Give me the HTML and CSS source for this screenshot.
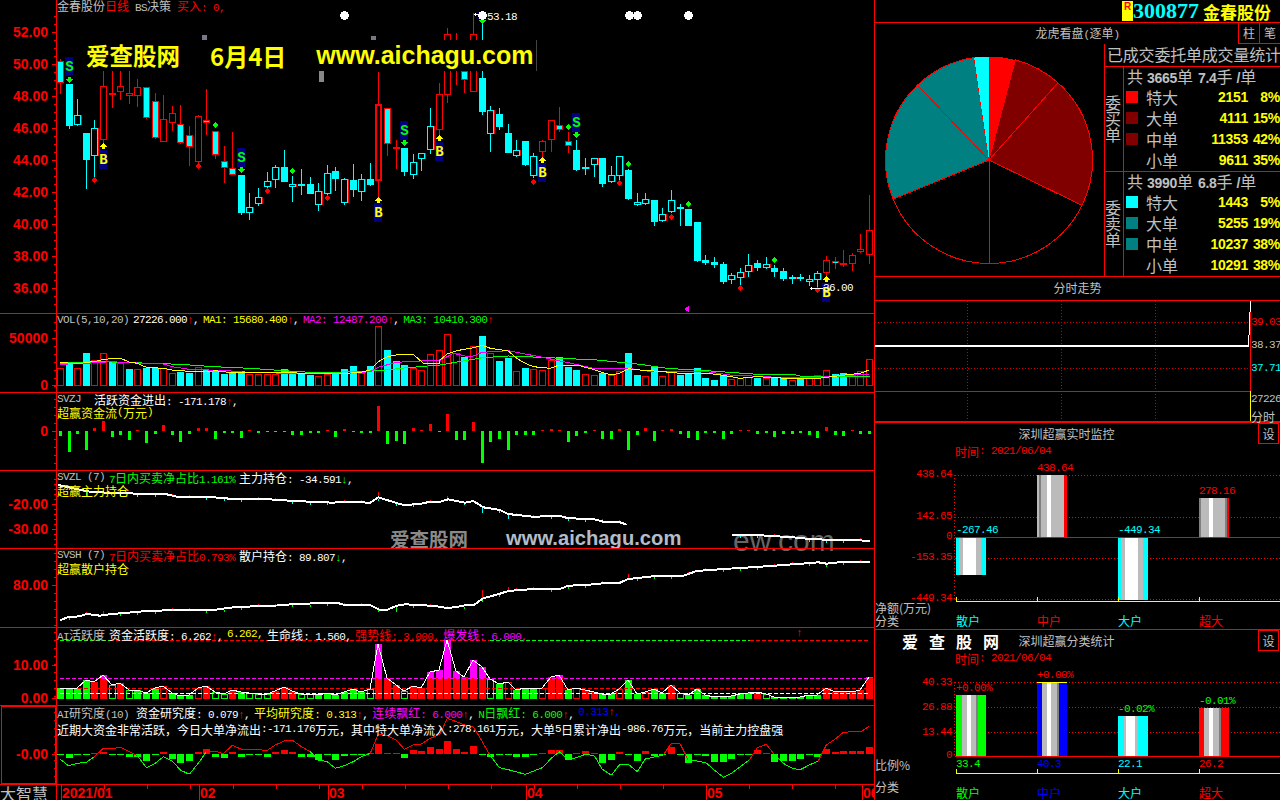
FILE: index.html
```html
<!DOCTYPE html>
<html lang="zh-CN">
<head>
<meta charset="utf-8">
<title>金春股份 300877</title>
<link rel="stylesheet" href="styles.css">
</head>
<body>
<div class="app">
  <main class="left">
    <div class="wm-main"><span class="wm-a">爱查股网</span><span class="wm-b">6月4日</span><span class="wm-c">www.aichagu.com</span></div>
    <div class="wm-mid"><span class="wm-d">爱查股网</span><span class="wm-e">www.aichagu.com</span><span class="wm-f">ew.com</span></div>

    <section class="pane h314" id="p-main">
      <div class="legend"><div class="lg-row"><span class="grey">金春股份</span><span class="red nogap">日线</span><span class="grey gap2"><span class="m">BS</span>决策</span><span class="red gap2">买入<span class="m">: 0,</span></span></div></div>
    </section>
    <section class="pane h79" id="p-vol">
      <div class="legend"><div class="lg-row"><span class="m grey">VOL(5,10,20)</span><span class="m white">27226.000<span class="red">↑</span>,</span><span class="m yellow">MA1: 15680.400<span class="red">↑</span><span class="white">,</span></span><span class="m magenta">MA2: 12487.200<span class="red">↑</span><span class="white">,</span></span><span class="m green">MA3: 10410.300<span class="red">↑</span></span></div></div>
    </section>
    <section class="pane h78" id="p-zj">
      <div class="legend"><div class="lg-row"><span class="m grey gapr">SVZJ</span><span class="white">活跃资金进出<span class="m">: -171.178<span class="red">↑</span>,</span></span></div><div class="lg-row yellow">超赢资金流<span class="m">(</span>万元<span class="m">)</span></div></div>
    </section>
    <section class="pane h78" id="p-zl">
      <div class="legend"><div class="lg-row"><span class="m grey">SVZL (7)</span><span class="green"><span class="m">7</span>日内买卖净占比<span class="m">1.161%</span></span><span class="white">主力持仓<span class="m">: -34.591<span class="green">↓</span>,</span></span></div><div class="lg-row yellow">超赢主力持仓</div></div>
    </section>
    <section class="pane h79" id="p-sh">
      <div class="legend"><div class="lg-row"><span class="m grey">SVSH (7)</span><span class="red"><span class="m">7</span>日内买卖净占比<span class="m">0.793%</span></span><span class="white">散户持仓<span class="m">: 89.807<span class="green">↓</span>,</span></span></div><div class="lg-row yellow">超赢散户持仓</div></div>
    </section>
    <section class="pane h78" id="p-act">
      <div class="legend"><div class="lg-row"><span class="grey"><span class="m">AI</span>活跃度</span><span class="white">资金活跃度<span class="m">: 6.262<span class="red">↑</span>,</span></span><span class="m yellow">6.262,</span><span class="white">生命线<span class="m">: 1.560,</span></span><span class="red">强势线<span class="m">: 3.000,</span></span><span class="magenta">爆发线<span class="m">: 6.000,</span></span></div></div>
    </section>
    <section class="pane h79" id="p-res">
      <div class="legend"><div class="lg-row"><span class="grey"><span class="m">AI</span>研究度<span class="m">(10)</span></span><span class="white gap7">资金研究度<span class="m">: 0.079<span class="red">↑</span>,</span></span><span class="yellow">平均研究度<span class="m">: 0.313<span class="red">↑</span><span class="white">,</span></span></span><span class="magenta">连续飘红<span class="m">: 6.000<span class="red">↑</span><span class="white">,</span></span></span><span class="green"><span class="m">N</span>日飘红<span class="m">: 6.000<span class="red">↑</span><span class="white">,</span></span></span><span class="m blue">0.313<span class="red">↑</span>,</span></div><div class="lg-row white lg-second">近期大资金非常活跃，今日大单净流出<span class="m">:-171.176</span>万元，其中特大单净流入<span class="m">:278.161</span>万元，大单<span class="m">5</span>日累计净出<span class="m">-986.76</span>万元，当前主力控盘强</div></div>
    </section>
    <section class="pane h15" id="p-axis">
      <div class="brand">大智慧</div>
    </section>
  </main>

  <aside class="right">
    <header class="quote"><span class="rmark">R</span><span class="code">300877</span><span class="qname">金春股份</span></header>

    <section class="dragon">
      <div class="dragon-head">
        <span></span>
        <span class="sec-title">龙虎看盘<span class="m">(</span>逐单<span class="m">)</span></span>
        <div class="btns"><span class="btn">柱</span><span class="btn">笔</span></div>
      </div>
      <div class="dragon-body">
        <div class="pie-box">
          <svg class="pie" width="229" height="232" viewBox="0 0 229 232" id="pie"></svg>
        </div>
        <div class="stat">
          <div class="stat-title">已成交委托单成交量统计</div>
          <div class="block">
            <div class="vlabel">委买单</div>
            <div class="rows">
              <div class="total">共<b class="tn">3665</b>单<b class="tn tn2">7.4</b>手<b class="tn">/</b>单</div>
              <div class="row"><i class="sw s-red"></i><span class="lb">特大</span><b class="num">2151</b><b class="pct">8%</b></div>
              <div class="row"><i class="sw s-dred"></i><span class="lb">大单</span><b class="num">4111</b><b class="pct">15%</b></div>
              <div class="row"><i class="sw s-dred"></i><span class="lb">中单</span><b class="num">11353</b><b class="pct">42%</b></div>
              <div class="row"><i class="sw"></i><span class="lb">小单</span><b class="num">9611</b><b class="pct">35%</b></div>
            </div>
          </div>
          <div class="block last">
            <div class="vlabel">委卖单</div>
            <div class="rows">
              <div class="total">共<b class="tn">3990</b>单<b class="tn tn2">6.8</b>手<b class="tn">/</b>单</div>
              <div class="row"><i class="sw s-cyan"></i><span class="lb">特大</span><b class="num">1443</b><b class="pct">5%</b></div>
              <div class="row"><i class="sw s-teal"></i><span class="lb">大单</span><b class="num">5255</b><b class="pct">19%</b></div>
              <div class="row"><i class="sw s-teal"></i><span class="lb">中单</span><b class="num">10237</b><b class="pct">38%</b></div>
              <div class="row"><i class="sw"></i><span class="lb">小单</span><b class="num">10291</b><b class="pct">38%</b></div>
            </div>
          </div>
        </div>
      </div>
    </section>

    <section class="fenshi">
      <div class="fs-head sec-title">分时走势</div>
      <svg id="fs" class="block-svg" width="405" height="122" viewBox="875 301 405 122"></svg>
    </section>

    <section class="monitor">
      <div class="sec-head"><span class="sec-title">深圳超赢实时监控</span><span class="btn set">设</span></div>
      <svg id="mon" class="block-svg" width="405" height="185" viewBox="875 445 405 185"></svg>
    </section>

    <section class="classify">
      <div class="sec-head"><span class="logo">爱查股网</span><span class="sec-title">深圳超赢分类统计</span><span class="btn set">设</span></div>
      <svg id="cls" class="block-svg" width="405" height="149" viewBox="875 651 405 149"></svg>
    </section>
  </aside>
</div>
<script src="chart.js"></script>
</body>
</html>
```
FILE: styles.css
```css
* { box-sizing: border-box; }
html, body { margin: 0; padding: 0; background: #000; }
body { width: 1280px; height: 800px; overflow: hidden; font: 12px/13px "Noto Sans CJK SC", "Liberation Sans", sans-serif; color: #c0c0c0; }
.app { display: flex; width: 1280px; height: 800px; }
.left { position: relative; width: 875px; flex: none; display: flex; flex-direction: column; border-right: 1px solid #f00; }
.right { flex: 1; display: flex; flex-direction: column; min-width: 0; overflow: hidden; }

.pane { position: relative; z-index: 1; overflow: hidden; border-bottom: 1px solid #f00; }
.pane svg { display: block; }
.h314 { height: 314px; } .h79 { height: 79px; } .h78 { height: 78px; }
.h15 { height: 15px; border-bottom: 0; }
svg { shape-rendering: crispEdges; }

.legend { position: absolute; left: 57px; top: 0; white-space: pre; }
#p-main .legend { top: -1px; }
.lg-row { display: flex; gap: 4px; height: 13px; }
.lg-row.yellow, .lg-second { gap: 0; }
.lg-second { margin-top: 4px; }
.nogap { margin-left: -4px; }
.gap2 { margin-left: 2px; }
.gap7 { margin-left: 3px; }
.gapr { margin-right: 9px; }

.m { font-family: "Liberation Mono", monospace; font-size: 11px; letter-spacing: -.6px; }
.grey { color: #c0c0c0; } .white { color: #fff; } .red { color: #f00; } .yellow { color: #ff0; }
.magenta { color: #f0f; } .green { color: #0f0; } .blue { color: #00f; } .cyan { color: #0ff; }

.brand { position: absolute; left: 0; top: -1px; font-size: 16px; line-height: 18px; color: #c0c0c0; }

.wm-main { position: absolute; z-index: 2; left: 83px; top: 40px; width: 454px; height: 31px; background: #000; color: #ff0; font-weight: 700; display: flex; align-items: center; line-height: 31px; white-space: nowrap; border-right: 1px solid #444; }
.wm-a { font-size: 23.5px; margin-left: 3px; }
.wm-b { font-size: 24px; margin-left: 30px; }
.wm-c { font: 700 25px/31px "Liberation Sans", sans-serif; margin-left: 30px; }
.wm-mid { position: absolute; z-index: 0; left: 390px; top: 522px; width: 450px; height: 33px; overflow: hidden; white-space: nowrap; line-height: 33px; }
.wm-d { position: absolute; left: 0; top: 0; font-size: 19.5px; font-weight: 700; color: #8a8a8a; }
.wm-e { position: absolute; left: 116px; top: 0; font: 700 20.2px/33px "Liberation Sans", sans-serif; color: #b4bcc8; }
.wm-f { position: absolute; left: 343px; top: 2px; font: 400 30px/33px "Liberation Sans", sans-serif; color: #666; }

.quote { height: 23px; flex: none; border-bottom: 1px solid #f00; display: flex; align-items: stretch; padding-left: 247px; }
.rmark { width: 11px; height: 20px; margin-top: 1px; background: #ff0; color: #f00; font: 700 10px/11px "Liberation Sans", sans-serif; text-align: center; }
.code { width: 67px; font: 700 22px/22px "Liberation Serif", serif; color: #0ff; }
.qname { font-size: 17px; line-height: 24px; font-weight: 700; color: #ff0; margin-left: 3px; white-space: nowrap; }

.sec-title { color: #c0c0c0; font-size: 12px; line-height: 20px; white-space: nowrap; }
.dragon { height: 254px; flex: none; border-bottom: 1px solid #f00; display: flex; flex-direction: column; }
.dragon-head { height: 21px; display: grid; grid-template-columns: 42px 1fr 42px; text-align: center; }
.btns { display: flex; }
.btn { display: block; width: 21px; height: 21px; border: 1px solid #f00; border-top: 0; border-right: 0; color: #c0c0c0; font-size: 12px; line-height: 20px; text-align: center; }
.dragon-body { display: flex; height: 232px; }
.pie-box { width: 229px; flex: none; }
.pie { display: block; }
.stat { flex: 1; border-left: 1px solid #f00; min-width: 0; }
.stat-title { height: 23px; border-bottom: 1px solid #f00; font-size: 16px; line-height: 21px; padding-left: 2px; white-space: nowrap; color: #c0c0c0; overflow: hidden; letter-spacing: -.2px; }
.block { display: flex; height: 105px; border-bottom: 1px solid #f00; }
.block.last { border-bottom: 0; height: 104px; }
.vlabel { width: 19px; flex: none; border-right: 1px solid #f00; font-size: 16px; line-height: 15px; writing-mode: vertical-lr; text-orientation: upright; text-align: center; color: #c0c0c0; }
.rows { flex: 1; display: flex; flex-direction: column; min-width: 0; }
.total { height: 19px; padding-left: 3px; font-size: 16px; line-height: 19px; color: #c0c0c0; white-space: nowrap; }
.tn { font: 700 14px/19px "Liberation Sans", sans-serif; margin-left: 4px; letter-spacing: -.3px; }
.tn2 { margin-left: 5px; }
.tn:not(.tn2) { margin-right: 0; }
.row { height: 21px; display: grid; grid-template-columns: 2px 12px 8px 40px 62px 1fr; align-items: center; }
.sw { grid-column: 2; width: 12px; height: 12px; display: block; }
.s-red { background: #f00; } .s-dred { background: #800000; } .s-cyan { background: #0ff; } .s-teal { background: #008080; }
.lb { grid-column: 4; font-size: 16px; line-height: 20px; color: #c0c0c0; }
.num, .pct { font: 700 14px/20px "Liberation Sans", sans-serif; color: #ff0; text-align: right; letter-spacing: -.3px; }
.num { grid-column: 5; }
.pct { grid-column: 6; padding-right: 0; }

.fenshi { height: 146px; flex: none; display: flex; flex-direction: column; }
.fs-head { height: 24px; border-bottom: 1px solid #f00; text-align: center; line-height: 21px; }
.block-svg { display: block; flex: none; }

.monitor { height: 207px; flex: none; display: flex; flex-direction: column; border-top: 0; }
.classify { height: 170px; flex: none; display: flex; flex-direction: column; position: relative; }
.sec-head { height: 22px; flex: none; display: flex; align-items: flex-start; padding-right: 1px; }
.sec-head .sec-title { flex: 1; text-align: center; line-height: 22px; }
.btn.set { border: 1px solid #f00; border-top: 1px solid #f00; height: 21px; line-height: 19px; }
.logo { position: absolute; left: 27px; top: 2px; font-size: 16px; line-height: 18px; font-weight: 700; color: #fff; letter-spacing: 11px; white-space: nowrap; }

.ty { font: 700 14px "Liberation Sans", sans-serif; fill: #f00; text-anchor: end; dominant-baseline: central; }
.tx { font: 700 14px "Liberation Sans", sans-serif; fill: #f00; dominant-baseline: central; }
.tm { font-family: "Liberation Mono", monospace; font-size: 11px; letter-spacing: -.6px; dominant-baseline: central; }
.tc { font-family: "Noto Sans CJK SC", sans-serif; font-size: 12px; dominant-baseline: central; }
.end { text-anchor: end; }
.bl { font-family: "Liberation Sans", sans-serif; font-size: 14px; font-weight: 400; }
.lab { font-family: "Liberation Mono", monospace; font-size: 14px; font-weight: 700; text-anchor: middle; dominant-baseline: central; }
```
FILE: chart.js
```js
(function () {
  var R = '#f00', C = '#0ff', G = '#0f0', Y = '#ff0', W = '#fff', M = '#f0f';
  var N = 95;
  function X(i) { return Math.round(60 + 8.606 * i); }
  function rect(x, y, w, h, f) { return '<rect x="' + x + '" y="' + y + '" width="' + w + '" height="' + Math.max(h, 0) + '" fill="' + f + '"/>'; }
  function box(x, y, w, h, s, f) { return '<rect x="' + (x + .5) + '" y="' + (y + .5) + '" width="' + (w - 1) + '" height="' + Math.max(h - 1, 0) + '" stroke="' + s + '" fill="' + (f || 'none') + '"/>'; }
  function line(x1, y1, x2, y2, s, extra) { return '<line x1="' + x1 + '" y1="' + y1 + '" x2="' + x2 + '" y2="' + y2 + '" stroke="' + s + '" ' + (extra || '') + '/>'; }
  function poly(pts, s, w) { return '<polyline fill="none" stroke="' + s + '" stroke-width="' + (w || 1) + '" points="' + pts.map(function (p) { return p[0].toFixed(1) + ',' + p[1].toFixed(1); }).join(' ') + '"/>'; }
  function text(x, y, t, c, f) { return '<text x="' + x + '" y="' + y + '" class="' + c + '"' + (f ? ' fill="' + f + '"' : '') + '>' + t + '</text>'; }
  function Z(list, xo, yo) { return list.map(function (p) { return [xo + p[0] / 3, yo + p[1] / 3]; }); }
  function mount(id, top, h) {
    var p = document.getElementById(id);
    var s = document.createElementNS('http://www.w3.org/2000/svg', 'svg');
    s.setAttribute('width', 874); s.setAttribute('height', h);
    s.setAttribute('viewBox', '0 ' + top + ' 874 ' + h);
    return { el: s, p: p };
  }
  function done(m, html) { m.el.innerHTML = html; m.p.insertBefore(m.el, m.p.firstChild); }
  function axis(top, h, majors, step, from, to) {
    var o = rect(56, top, 1, h, R);
    for (var y = from; y <= to; y += step) o += rect(54, Math.round(y), 2, 1, R);
    majors.forEach(function (m) { o += rect(52, m[0], 4, 1, R) + text(48, m[0], m[1], 'ty'); });
    return o;
  }

  /* main candles: [bodyTop, bodyBottom, high, low, type] in 3x-zoom px; type 0 red hollow, 1 cyan solid, 2 cyan hollow, 3 red frame cyan fill */
  var K = [[183,250,178,282,3],[252,378,252,387,1],[346,376,297,378,2],[399,480,399,567,1],[385,470,360,530,2],[259,422,213,430,0],[280,284,213,323,4],[259,277,213,299,0],[280,290,213,311,0],[262,290,238,323,0],[262,355,262,358,3],[304,416,280,418,3],[358,428,286,428,0],[340,370,318,392,0],[373,430,316,432,3],[406,442,378,497,3],[349,488,346,490,0],[361,371,268,407,3],[394,466,394,478,3],[484,505,438,548,3],[505,526,397,526,3],[525,640,525,645,1],[622,640,580,660,2],[592,613,565,618,2],[544,562,516,570,2],[502,541,495,564,2],[501,545,450,545,1],[553,562,529,608,2],[552,556,507,585,1],[552,581,531,581,1],[574,617,549,633,2],[520,584,495,584,2],[513,536,501,573,1],[538,611,535,615,2],[541,572,492,590,1],[538,577,522,603,2],[537,554,489,557,1],[313,544,216,600,5],[325,433,325,470,3],[442,449,420,507,0],[444,515,444,527,1],[487,526,462,536,2],[460,479,460,513,2],[379,452,324,462,2],[283,391,250,405,0],[102,286,84,310,0],[100,110,100,255,4],[213,240,213,278,3],[102,275,40,275,0],[234,335,72,345,1],[331,404,318,456,2],[342,381,324,390,1],[399,459,372,459,1],[451,470,420,470,2],[423,496,423,498,1],[468,528,460,535,2],[424,456,420,475,0],[361,422,361,456,0],[376,391,321,396,3],[424,440,396,460,3],[450,510,420,512,1],[502,509,474,525,2],[475,497,475,531,2],[474,552,474,561,1],[526,548,498,548,2],[468,527,468,540,2],[510,597,507,600,1],[606,614,578,618,2],[598,614,578,614,2],[600,666,600,678,1],[643,665,624,665,2],[601,638,570,640,2],[621,627,612,678,6],[627,678,627,678,1],[666,783,666,785,1],[780,790,765,795,1],[786,795,771,804,1],[792,846,786,852,1],[826,842,820,852,2],[817,835,804,855,2],[796,818,762,830,2],[790,804,780,813,1],[793,806,771,808,2],[804,816,795,831,1],[813,836,804,842,1],[832,838,825,852,2],[832,838,822,842,1],[838,848,825,858,2],[820,842,813,860,2],[780,818,768,830,0],[782,788,771,807,7],[790,794,750,800,4],[765,793,760,813,0],[748,758,702,758,0],[690,764,585,792,0]];
  var o = axis(0, 313, [[32,'52.00'],[64,'50.00'],[96,'48.00'],[128,'46.00'],[160,'44.00'],[192,'42.00'],[224,'40.00'],[256,'38.00'],[288,'36.00']], 8, 16, 304);
  K.forEach(function (k, i) {
    var x = X(i), t = k[0] / 3, b = k[1] / 3, hi = k[2] / 3, lo = k[3] / 3, ty = k[4];
    var col = (ty === 0 || ty === 3 || ty === 4 || ty === 5 || ty === 7) ? R : C;
    o += rect(x, Math.round(hi), 1, Math.round(lo - hi), col);
    var rx = x - 3, ry = Math.round(t), rh = Math.max(Math.round(b - t), 2);
    if (i === 46) return;
    if (ty === 0 || ty === 5) { o += rect(rx, ry, 7, rh, '#000') + box(rx, ry, 7, rh, R); if (ty === 5) o += box(rx + 1, ry + 1, 5, rh - 2, R); }
    else if (ty === 1) o += rect(rx, ry, 7, rh, C);
    else if (ty === 2) o += rect(rx, ry, 7, rh, '#000') + box(rx, ry, 7, rh, C) + rect(x + 4, ry, 1, rh, R);
    else if (ty === 3) o += rect(rx, ry, 7, rh, R) + rect(rx + 1, ry + 1, 5, rh - 2, C);
    else if (ty === 4) o += rect(rx, ry, 7, rh, R);
    else if (ty === 6) o += rect(rx, ry, 7, rh, C);
    else if (ty === 7) o += rect(rx, ry, 7, rh, R) + rect(rx + 1, ry + 1, 5, Math.max(rh - 2, 1), C);
  });
  function dia(i, z, c) { var x = X(i) + .5, y = z / 3; return '<polygon points="' + (x - 3) + ',' + y + ' ' + x + ',' + (y - 3) + ' ' + (x + 3) + ',' + y + ' ' + x + ',' + (y + 3) + '" fill="' + c + '"/>'; }
  [[4,541],[16,499],[24,574],[31,595],[55,545],[65,550],[71,650],[79,865],[88,870]].forEach(function (d) { o += dia(d[0], d[1], R); });
  [[18,376],[27,514],[59,382],[66,493],[73,613],[83,781]].forEach(function (d) { o += dia(d[0], d[1], G); });
  function tag(i, z, ch) {
    var x = X(i), y = Math.round(z / 3);
    return rect(x - 4, y, 8, 19, '#000080') + text(x + .5, y + 10, ch, 'lab', ch === 'B' ? Y : G);
  }
  function arrowUp(i, z) { var x = X(i) + .5, y = z / 3; return '<polygon points="' + (x - 4) + ',' + (y + 3) + ' ' + x + ',' + (y - 1) + ' ' + (x + 4) + ',' + (y + 3) + '" fill="' + Y + '"/>' + rect(X(i) - 1, Math.round(y + 3), 3, 2, Y); }
  function arrowDn(i, z) { var x = X(i) + .5, y = z / 3; return rect(X(i) - 1, Math.round(y), 3, 3, G) + '<polygon points="' + (x - 4) + ',' + (y + 2) + ' ' + x + ',' + (y + 6) + ' ' + (x + 4) + ',' + (y + 2) + '" fill="' + G + '"/>'; }
  [[1,172,230],[21,445,502],[40,363,420],[60,340,397]].forEach(function (s) { o += tag(s[0], s[1], 'S') + arrowDn(s[0], s[2]); });
  [[5,450,433],[37,610,595],[44,425,408],[56,490,473],[89,848,832]].forEach(function (s) { o += tag(s[0], s[1], 'B') + arrowUp(s[0], s[2]); });
  o += rect(478, 12, 8, 7, '#000080') + arrowDn(49, 54);
  [344, 482, 629, 637, 688].forEach(function (x) { o += rect(x - 3, 12, 7, 7, W) + rect(x - 4, 14, 9, 3, W) + rect(x - 1, 11, 3, 9, W); });
  o += line(474, 14.5, 482, 14.5, W) + rect(475, 13, 1, 3, W) + text(487, 17, '53.18', 'tm', W);
  o += line(810, 288.5, 823, 288.5, W) + rect(811, 287, 1, 3, W) + text(823, 288, '36.00', 'tm', W);
  o += rect(202, 35, 5, 5, '#778') + rect(371, 36, 5, 4, '#778') + rect(319, 71, 5, 11, '#888');
  o += '<polygon points="684,309 689,306 689,312" fill="' + M + '"/>';
  var m = mount('p-main', 0, 313); done(m, o);

  /* volume */
  var V = [[0,175],[1,157],[0,175],[1,129],[0,150],[0,130],[1,157],[0,160],[1,178],[0,178],[1,173],[1,173],[0,175],[0,190],[1,185],[1,190],[0,172],[1,180],[1,183],[1,192],[1,185],[1,182],[0,192],[0,192],[0,192],[0,192],[1,178],[1,192],[1,192],[1,195],[0,198],[0,192],[1,192],[1,178],[1,168],[0,190],[1,168],[0,48],[1,120],[1,154],[1,165],[0,175],[0,180],[0,133],[0,120],[0,72],[0,128],[1,140],[0,108],[1,78],[0,130],[1,153],[1,145],[0,183],[1,175],[0,178],[0,180],[0,150],[1,142],[1,170],[1,180],[0,193],[0,196],[1,188],[0,196],[0,184],[1,129],[1,195],[0,199],[1,172],[0,199],[0,185],[1,195],[1,190],[1,175],[1,204],[1,210],[1,195],[0,208],[0,204],[0,200],[1,203],[0,203],[1,203],[1,203],[0,210],[1,206],[0,205],[0,196],[0,181],[1,193],[1,190],[0,194],[0,184],[0,148]];
  o = axis(314, 78, [[338,'50000'],[385,'0']], 8, 322, 386);
  V.forEach(function (v, i) {
    var x = X(i) - 3, y = Math.round(310 + v[1] / 3), h = 386 - y;
    o += v[0] ? rect(x, y, 7, h, C) : box(x, y, 7, h, R);
  });
  var yA = Z([[180,157],[215,160],[232,162],[259,157],[283,155],[310,148],[361,145],[388,156],[412,160],[439,172],[490,175],[517,180],[568,184],[619,186],[646,182],[697,188],[750,188],[850,188],[930,190],[1006,192],[1084,187],[1111,180],[1135,155],[1162,140],[1200,133],[1240,133],[1270,160],[1318,160]], 0, 310).concat(Z([[0,150],[22,132],[50,122],[100,113],[127,106],[151,115],[205,123],[230,145],[256,160],[280,170],[330,175],[358,165],[410,165],[460,178],[490,188],[514,195],[538,190],[565,176],[600,180],[670,185],[720,190],[800,190],[850,196],[900,205],[950,200],[1040,205],[1100,207],[1135,205],[1190,198],[1260,190],[1288,180]], 440, 310));
  var mA = Z([[180,163],[259,160],[334,155],[388,158],[490,162],[517,170],[568,178],[682,182],[750,188],[900,190],[1040,190],[1111,185],[1135,172],[1189,157],[1318,150]], 0, 310).concat(Z([[0,152],[40,130],[75,138],[100,138],[127,127],[205,122],[256,132],[307,142],[385,158],[460,175],[565,175],[620,183],[720,185],[800,185],[870,195],[980,200],[1040,204],[1135,202],[1288,192]], 440, 310));
  var gA = Z([[180,160],[310,155],[540,163],[643,170],[750,175],[850,182],[930,187],[1000,187],[1135,182],[1213,174],[1318,165]], 0, 310).concat(Z([[0,165],[127,143],[205,138],[300,142],[470,150],[600,163],[680,175],[800,182],[950,193],[1060,193],[1080,198],[1290,198]], 440, 310));
  o += poly(gA, G) + poly(mA, M) + poly(yA, Y);
  m = mount('p-vol', 314, 78); done(m, o);

  /* SVZJ */
  var J = [-14,-64,-8,-58,10,31,-17,-11,-26,2,-35,-8,17,-12,-32,-8,10,10,-23,-5,-5,-20,4,-5,-2,-4,-4,-11,-11,-7,-5,1,-17,6,-1,-7,-6,76,-38,-29,-38,10,4,22,-4,52,-28,-28,28,-97,-32,-23,-58,-11,-11,-11,4,6,3,-34,-14,-5,1,-23,-23,6,-58,-11,10,-31,1,5,-8,-20,-28,-5,-5,-23,-8,1,4,-8,-5,-17,-8,-8,-5,-11,-20,12,-11,-14,4,-8,-8];
  o = axis(393, 77, [[431,'0']], 8, 399, 463);
  J.forEach(function (v, i) {
    var x = X(i) - 1, h = Math.max(Math.round(Math.abs(v) / 3), 1);
    o += v > 0 ? rect(x, 431 - h, 3, h, R) : rect(x, 431, 3, h, G);
  });
  m = mount('p-zj', 393, 77); done(m, o);

  function ticks(pts, big, ca) {
    var s = '';
    function at(x) { for (var j = 0; j < pts.length - 1; j++) if (x >= pts[j][0] && x <= pts[j + 1][0]) return pts[j][1] + (pts[j + 1][1] - pts[j][1]) * (x - pts[j][0]) / (pts[j + 1][0] - pts[j][0]); return null; }
    for (var i = 0; i < N; i++) { var y = at(X(i)); if (y === null) continue; var red = (i * 7) % 5 < 2; if (i % 2) s += rect(X(i), Math.round(y) - (red ? 2 : -1), 1, 2, red ? R : ca); }
    big.forEach(function (b) { var y = at(X(b[0])); if (y !== null) s += rect(X(b[0]), Math.round(y) + (b[1] < 0 ? b[1] : 0), 1, Math.abs(b[1]), b[1] < 0 ? R : ca); });
    return s;
  }

  /* SVZL */
  var zl1 = Z([[175,525],[220,535],[270,545],[320,548],[380,548],[420,553],[500,553],[530,560],[620,560],[700,567],[800,567],[830,570],[930,575],[1000,578],[1030,575],[1110,578],[1135,562],[1160,570],[1210,585],[1260,582],[1290,575],[1320,575]], 0, 310).concat(Z([[25,568],[50,573],[75,578],[100,573],[130,592],[180,600],[205,612],[230,615],[280,620],[360,618],[385,625],[460,627],[490,635],[540,637],[560,644]], 440, 310));
  var zl2 = Z([[877,674],[930,674],[980,677],[1060,682],[1120,688],[1290,692]], 440, 310);
  o = axis(471, 77, [[504,'-20.00'],[529,'-30.00']], 5, 479, 544);
  o += ticks(zl1, [[37,-6],[45,-4],[49,7],[52,5],[3,5]], C) + ticks(zl2, [], C) + poly(zl1, W, 2) + poly(zl2, W, 2);
  m = mount('p-zl', 471, 77); done(m, o);

  /* SVSH */
  var sh = Z([[180,226],[205,216],[240,214],[260,207],[300,212],[335,207],[385,203],[430,199],[520,195],[640,195],[700,187],[780,183],[850,181],[880,177],[950,175],[1010,173],[1035,180],[1110,180],[1140,195],[1160,195],[1190,182],[1215,178],[1290,182],[1320,185]], 0, 545).concat(Z([[20,189],[50,186],[75,181],[100,181],[130,160],[180,146],[205,138],[280,132],[360,132],[385,122],[440,120],[490,115],[540,113],[565,102],[640,94],[730,92],[770,78],[850,72],[950,66],[1030,60],[1085,56],[1135,52],[1160,56],[1210,50],[1290,50]], 440, 545));
  o = axis(549, 78, [[585,'80.00']], 8, 553, 625);
  o += ticks(sh, [[49,-9],[52,-4],[37,-2],[39,6],[66,-5],[5,-4]], G) + poly(sh, W, 2);
  o += '';
  m = mount('p-sh', 549, 78); done(m, o);

  /* activity: type g solid green, G hollow green, r solid red, R hollow red, m magenta on red */
  var A = 'g430 g430 g430 g405 r412 m390 G420 r414 G436 g436 g444 g430 R424 g444 g453 g450 R430 r424 G442 G448 r436 g442 G444 G447 G447 r438 r426 r437 G447 G447 g450 g445 g450 g442 g432 g441 G432 m297 r400 r420 G438 r423 r430 m381 m376 m285 m378 r396 m345 m366 G402 g417 R410 g435 g429 g432 R430 r396 m390 g435 R430 r435 r442 g447 g447 R432 g405 g447 R442 g432 g444 r420 G444 g450 g432 g450 g456 g453 g453 g447 g444 r441 G447 g456 g456 g456 g456 g450 g450 r430 r441 r437 r441 r435 m396'.split(' ');
  o = axis(628, 77, [[665,'10.00'],[698,'0.00']], 8, 632, 696);
  var base = 699, tops = [];
  A.forEach(function (a, i) {
    var t = a[0], z = +a.slice(1), y = Math.round(545 + z / 3), x = X(i) - 3, h = base - y;
    tops.push([X(i), y]);
    if (t === 'g') o += rect(x, y, 7, h, G);
    else if (t === 'G') o += box(x, y, 7, h, G);
    else if (t === 'r') o += rect(x, y, 7, h, R);
    else if (t === 'R') o += box(x, y, 7, h, R);
    else { o += rect(x, y, 7, 678 - y, M) + rect(x, 678, 7, base - 678, R); }
  });
  var dash = 'stroke-dasharray="4 2"';
  o += line(60, 640.5, 110, 640.5, G, dash) + line(110, 640.5, 490, 640.5, R, dash) + line(490, 640.5, 750, 640.5, G, dash) + line(750, 640.5, 870, 640.5, R, dash);
  o += line(60, 678.5, 870, 678.5, M, dash) + line(60, 688.5, 870, 688.5, R, dash) + line(60, 693.5, 870, 693.5, W, dash);
  o += poly(tops, W);
  o += text(796, 633, '↑', 'tm', R);
  m = mount('p-act', 628, 77); done(m, o);

  /* research */
  var Q = [632,640,632,632,624,621,632,632,636,636,650,630,622,642,656,650,622,612,636,639,621,636,632,632,636,621,615,621,636,636,646,632,645,634,632,632,624,597,626,624,640,615,618,606,612,588,612,621,603,632,636,632,632,636,636,632,627,615,615,646,624,618,627,654,645,621,632,648,618,635,632,606,632,654,632,635,651,651,642,632,632,615,627,651,648,648,642,632,636,612,621,618,618,618,606];
  o = rect(1, 706, 55, 78, '#000') + box(1, 706, 55, 78, R) + axis(706, 78, [[754,'-0.00']], 8, 712, 776);
  Q.forEach(function (z, i) {
    var y = 754, h = Math.max(Math.round(Math.abs(z - 628) / 3), 1), x = X(i) - 3;
    o += z < 628 ? rect(x, y - h, 7, h, R) : rect(x, y, 7, h, G);
  });
  var cv = Z([[180,642],[205,662],[232,655],[259,652],[283,635],[310,610],[334,612],[361,606],[388,620],[412,632],[439,668],[466,655],[490,635],[517,648],[541,675],[568,688],[595,655],[619,620],[646,618],[670,626],[697,601],[724,613],[775,613],[799,618],[826,600],[853,588],[877,585],[904,605],[931,620],[955,645],[982,650],[1006,670],[1033,662],[1060,650],[1084,635],[1111,625],[1135,567],[1162,572],[1189,585],[1213,613],[1240,600],[1264,597],[1291,580],[1320,568]], 0, 545).concat(Z([[22,520],[49,530],[75,540],[100,545],[127,590],[151,632],[178,668],[205,674],[256,688],[307,668],[334,640],[358,620],[385,645],[409,638],[436,628],[463,632],[487,673],[514,691],[538,660],[565,658],[592,680],[616,642],[643,636],[670,630],[694,595],[721,597],[745,646],[772,648],[799,654],[823,675],[850,697],[874,685],[901,665],[928,645],[952,608],[979,598],[1003,628],[1030,655],[1057,670],[1081,674],[1108,660],[1135,648],[1159,600],[1186,582],[1210,562],[1237,560],[1264,560],[1288,543]], 440, 545));
  for (var j = 0; j < cv.length - 1; j++) {
    o += poly([cv[j], cv[j + 1]], (cv[j][1] + cv[j + 1][1]) / 2 < 754.5 ? R : G);
  }
  m = mount('p-res', 706, 78); done(m, o);

  /* time axis */
  o = rect(56, 785, 1, 15, R);
  [61, 199, 328, 526, 706, 862].forEach(function (x) { o += rect(x, 785, 1, 15, R); });
  for (var t = 61 + 43; t < 870; t += 43) o += rect(t, 785, 1, 4, R);
  o += text(62, 793, '2021/01', 'tx') + text(200, 793, '02', 'tx') + text(329, 793, '03', 'tx') + text(527, 793, '04', 'tx') + text(707, 793, '05', 'tx') + text(863, 793, '06', 'tx');
  m = mount('p-axis', 785, 15); done(m, o);

  /* pie */
  function wedge(a, b, f) {
    var cx = 114, cy = 116, r = 103.5;
    function p(d) { var t = (d - 90) * Math.PI / 180; return (cx + r * Math.cos(t)).toFixed(1) + ' ' + (cy + r * Math.sin(t)).toFixed(1); }
    return '<path d="M' + cx + ' ' + cy + ' L' + p(a) + ' A' + r + ' ' + r + ' 0 ' + (b - a > 180 ? 1 : 0) + ' 1 ' + p(b) + ' Z" fill="' + f + '" stroke="' + (f === R || f === C ? 'none' : R) + '"/>';
  }
  document.getElementById('pie').innerHTML =
    wedge(14.7, 41.8, '#800000') + wedge(41.8, 116, '#800000') + wedge(116, 180, '#000') + wedge(180, 247.8, '#000') + wedge(247.8, 316.3, '#008080') + wedge(316.3, 351.7, '#008080') + wedge(0, 14.7, R) + wedge(351.7, 360, C);

  /* intraday */
  var grey = '#c0c0c0';
  var dot = 'stroke-dasharray="1 2"';
  o = '';
  [322, 368].forEach(function (y) { o += line(875, y + .5, 1250, y + .5, '#d00000', dot); });
  [967, 1061, 1155].forEach(function (x) { o += line(x + .5, 301, x + .5, 422, '#d00000', dot); });
  o += rect(875, 391, 375, 1, R) + rect(875, 345, 374, 2, W) + rect(1248, 335, 1, 11, W) + rect(1249, 312, 1, 23, W) + rect(1250, 301, 1, 11, W);
  o += rect(1250, 312, 1, 79, R) + rect(1250, 391, 1, 31, Y) + rect(875, 421, 405, 2, R);
  o += text(1251, 322, '39.03', 'tm', R) + text(1251, 345, '38.37', 'tm', grey) + text(1251, 368, '37.71', 'tm', C) + text(1251, 399, '27226', 'tm', grey) + text(1251, 416, '分时', 'tc', grey);
  document.getElementById('fs').innerHTML = o;

  function bar(x, y, h, stripes) {
    var s = '';
    stripes.forEach(function (st) { s += rect(x + st[0], y, st[1] - st[0], h, st[2]); });
    return s;
  }
  var b = '#bbb', d = '#808080';
  /* monitor */
  var rdot = 'stroke-dasharray="1 2"';
  o = line(954.5, 475, 954.5, 600, R, rdot);
  [475, 517, 558, 599].forEach(function (y) { o += line(955, y + .5, 1280, y + .5, R, rdot); });
  o += bar(956, 538, 37, [[0,3,C],[3,7,b],[7,20,W],[20,25,b],[25,30,C]]);
  o += bar(1037, 475, 62, [[0,2,b],[2,4,d],[4,10,b],[10,14,W],[14,27,b],[27,30,R]]);
  o += bar(1118, 538, 62, [[0,3,C],[3,7,b],[7,20,W],[20,25,b],[25,30,C]]);
  o += bar(1199, 498, 39, [[0,2,d],[2,10,b],[10,14,W],[14,26,b],[26,28,d],[28,30,R]]);
  o += rect(955, 537, 325, 1, R) + rect(956, 601, 324, 1, Y);
  [956, 1037, 1118, 1199].forEach(function (x) { o += rect(x, 597, 1, 4, Y); });
  [['438.64',475],['142.65',517],['0',537],['-153.35',558],['-449.34',599]].forEach(function (l) { o += text(952, l[1] - 1, l[0], 'tm end', R); });
  o += text(955, 451, '时间', 'tc', R) + text(979, 451, ': 2021/06/04', 'tm', R);
  o += text(956, 530, '-267.46', 'tm', C) + text(1037, 468, '438.64', 'tm', R) + text(1118, 530, '-449.34', 'tm', C) + text(1199, 491, '278.16', 'tm', R);
  o += text(875, 607, '净额(万元)', 'tc', grey) + text(875, 620, '分类', 'tc', grey);
  o += text(956, 620, '散户', 'tc', C) + text(1037, 620, '中户', 'tc', R) + text(1118, 620, '大户', 'tc', C) + text(1199, 620, '超大', 'tc', R);
  o += rect(875, 629, 405, 1, R);
  document.getElementById('mon').innerHTML = o;

  /* classify */
  o = line(954.5, 681, 954.5, 755, R, rdot);
  [681, 706, 731].forEach(function (y) { o += line(955, y + .5, 1280, y + .5, R, rdot); });
  o += bar(956, 694, 61, [[0,6,G],[6,11,b],[11,15,W],[15,20,b],[20,22,d],[22,30,G]]);
  o += bar(1037, 681, 74, [[0,5,'#00f'],[5,10,b],[10,14,W],[14,20,b],[20,22,d],[22,30,'#00f']]) + rect(1037, 681, 30, 1, Y);
  o += bar(1118, 715, 40, [[0,6,C],[6,8,b],[8,17,W],[17,20,b],[20,30,C]]);
  o += bar(1199, 707, 48, [[0,5,R],[5,10,b],[10,14,W],[14,20,b],[20,22,d],[22,30,R]]);
  o += rect(955, 755, 325, 1, R) + rect(956, 772, 324, 1, Y);
  [956, 1037, 1118, 1199].forEach(function (x) { o += rect(x, 768, 1, 4, Y); });
  [['40.33',681],['26.88',706],['13.44',731],['0',754]].forEach(function (l) { o += text(952, l[1], l[0], 'tm end', R); });
  o += text(955, 657, '时间', 'tc', R) + text(979, 657, ': 2021/06/04', 'tm', R);
  o += text(956, 687, '+0.00%', 'tm', R) + text(1037, 674, '+0.00%', 'tm', R) + text(1118, 708, '-0.02%', 'tm', G) + text(1199, 700, '-0.01%', 'tm', G);
  o += text(875, 763, '比例%', 'tc', grey) + text(875, 785, '分类', 'tc', grey);
  o += text(956, 763, '33.4', 'tm', G) + text(1037, 763, '40.3', 'tm', '#00f') + text(1118, 763, '22.1', 'tm', C) + text(1199, 763, '26.2', 'tm', R);
  o += text(956, 791, '散户', 'tc', G) + text(1037, 791, '中户', 'tc', '#00f') + text(1118, 791, '大户', 'tc', C) + text(1199, 791, '超大', 'tc', R);
  document.getElementById('cls').innerHTML = o;
})();
```
